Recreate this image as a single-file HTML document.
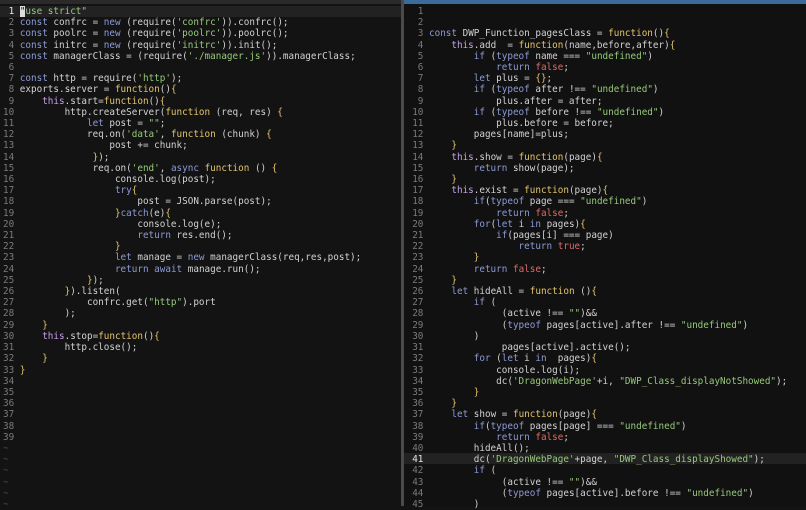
<!DOCTYPE html>
<html><head><meta charset="utf-8"><style>
html,body{margin:0;padding:0;background:#131313;width:806px;height:506px;overflow:hidden}
.top{position:absolute;left:0;top:0;width:806px;height:4px;background:#2a2a2a}
.topb{position:absolute;left:403px;top:0;width:403px;height:4px;background:#3a6b9a}
.div{position:absolute;left:401px;top:0;width:3px;height:506px;background:#4a4a4a}
.rp{position:absolute;left:404px;top:4px;width:402px;height:502px;background:#111}
pre{position:absolute;margin:0;font-family:"DejaVu Sans Mono","Liberation Mono",monospace;font-size:9.3px;line-height:11.2px;color:#d2d2d2;white-space:pre}
.hl{position:absolute;height:11.2px;background:#222}
.n{color:#7a7a7a}.cn{color:#e8e8e8}
.k{color:#8d9ad6}.t{color:#c5a0e6}.f{color:#e3c36c}.s{color:#96c97a}.b{color:#dd6a6a}.y{color:#e3c36c}.tl{color:#3c4a66}
.cur{background:#ddd;color:#111}
</style></head><body>
<div class="top"></div><div class="topb"></div>
<div class="hl" style="left:0;top:6px;width:401px"></div>
<div class="rp"></div>
<div class="div"></div>
<div class="hl" style="left:404px;top:453.2px;width:402px"></div>
<pre style="left:3px;top:6px"><span class="cn"> 1</span> <span class="cur">"</span><span class="s">use strict"</span>
<span class="n"> 2</span> <span class="k">const</span> confrc = <span class="k">new</span> (require(<span class="s">'confrc'</span>)).confrc();
<span class="n"> 3</span> <span class="k">const</span> poolrc = <span class="k">new</span> (require(<span class="s">'poolrc'</span>)).poolrc();
<span class="n"> 4</span> <span class="k">const</span> initrc = <span class="k">new</span> (require(<span class="s">'initrc'</span>)).init();
<span class="n"> 5</span> <span class="k">const</span> managerClass = (require(<span class="s">'./manager.js'</span>)).managerClass;
<span class="n"> 6</span>
<span class="n"> 7</span> <span class="k">const</span> http = require(<span class="s">'http'</span>);
<span class="n"> 8</span> exports.server = <span class="f">function</span>()<span class="y">{</span>
<span class="n"> 9</span>     <span class="t">this</span>.start=<span class="f">function</span>()<span class="y">{</span>
<span class="n">10</span>         http.createServer(<span class="f">function</span> (req, res) <span class="y">{</span>
<span class="n">11</span>             <span class="k">let</span> post = <span class="s">""</span>;
<span class="n">12</span>             req.on(<span class="s">'data'</span>, <span class="f">function</span> (chunk) <span class="y">{</span>
<span class="n">13</span>                 post += chunk;
<span class="n">14</span>              <span class="y">}</span>);
<span class="n">15</span>              req.on(<span class="s">'end'</span>, <span class="k">async</span> <span class="f">function</span> () <span class="y">{</span>
<span class="n">16</span>                  console.log(post);
<span class="n">17</span>                  <span class="k">try</span><span class="y">{</span>
<span class="n">18</span>                      post = JSON.parse(post);
<span class="n">19</span>                  <span class="y">}</span><span class="k">catch</span>(e)<span class="y">{</span>
<span class="n">20</span>                      console.log(e);
<span class="n">21</span>                      <span class="k">return</span> res.end();
<span class="n">22</span>                  <span class="y">}</span>
<span class="n">23</span>                  <span class="k">let</span> manage = <span class="k">new</span> managerClass(req,res,post);
<span class="n">24</span>                  <span class="k">return</span> <span class="k">await</span> manage.run();
<span class="n">25</span>             <span class="y">}</span>);
<span class="n">26</span>         <span class="y">}</span>).listen(
<span class="n">27</span>             confrc.get(<span class="s">"http"</span>).port
<span class="n">28</span>         );
<span class="n">29</span>     <span class="y">}</span>
<span class="n">30</span>     <span class="t">this</span>.stop=<span class="f">function</span>()<span class="y">{</span>
<span class="n">31</span>         http.close();
<span class="n">32</span>     <span class="y">}</span>
<span class="n">33</span> <span class="y">}</span>
<span class="n">34</span>
<span class="n">35</span>
<span class="n">36</span>
<span class="n">37</span>
<span class="n">38</span>
<span class="n">39</span>
<span class="tl">~</span>
<span class="tl">~</span>
<span class="tl">~</span>
<span class="tl">~</span>
<span class="tl">~</span>
<span class="tl">~</span></pre>
<pre style="left:406.6px;top:6px"><span class="n">  1</span>
<span class="n">  2</span>
<span class="n">  3</span> <span class="k">const</span> DWP_Function_pagesClass = <span class="f">function</span>()<span class="y">{</span>
<span class="n">  4</span>     <span class="t">this</span>.add  = <span class="f">function</span>(name,before,after)<span class="y">{</span>
<span class="n">  5</span>         <span class="k">if</span> (<span class="k">typeof</span> name === <span class="s">"undefined"</span>)
<span class="n">  6</span>             <span class="k">return</span> <span class="b">false</span>;
<span class="n">  7</span>         <span class="k">let</span> plus = <span class="y">{}</span>;
<span class="n">  8</span>         <span class="k">if</span> (<span class="k">typeof</span> after !== <span class="s">"undefined"</span>)
<span class="n">  9</span>             plus.after = after;
<span class="n"> 10</span>         <span class="k">if</span> (<span class="k">typeof</span> before !== <span class="s">"undefined"</span>)
<span class="n"> 11</span>             plus.before = before;
<span class="n"> 12</span>         pages[name]=plus;
<span class="n"> 13</span>     <span class="y">}</span>
<span class="n"> 14</span>     <span class="t">this</span>.show = <span class="f">function</span>(page)<span class="y">{</span>
<span class="n"> 15</span>         <span class="k">return</span> show(page);
<span class="n"> 16</span>     <span class="y">}</span>
<span class="n"> 17</span>     <span class="t">this</span>.exist = <span class="f">function</span>(page)<span class="y">{</span>
<span class="n"> 18</span>         <span class="k">if</span>(<span class="k">typeof</span> page === <span class="s">"undefined"</span>)
<span class="n"> 19</span>             <span class="k">return</span> <span class="b">false</span>;
<span class="n"> 20</span>         <span class="k">for</span>(<span class="k">let</span> i <span class="k">in</span> pages)<span class="y">{</span>
<span class="n"> 21</span>             <span class="k">if</span>(pages[i] === page)
<span class="n"> 22</span>                 <span class="k">return</span> <span class="b">true</span>;
<span class="n"> 23</span>         <span class="y">}</span>
<span class="n"> 24</span>         <span class="k">return</span> <span class="b">false</span>;
<span class="n"> 25</span>     <span class="y">}</span>
<span class="n"> 26</span>     <span class="k">let</span> hideAll = <span class="f">function</span> ()<span class="y">{</span>
<span class="n"> 27</span>         <span class="k">if</span> (
<span class="n"> 28</span>              (active !== <span class="s">""</span>)&amp;&amp;
<span class="n"> 29</span>              (<span class="k">typeof</span> pages[active].after !== <span class="s">"undefined"</span>)
<span class="n"> 30</span>         )
<span class="n"> 31</span>              pages[active].active();
<span class="n"> 32</span>         <span class="k">for</span> (<span class="k">let</span> i <span class="k">in</span>  pages)<span class="y">{</span>
<span class="n"> 33</span>             console.log(i);
<span class="n"> 34</span>             dc(<span class="s">'DragonWebPage'</span>+i, <span class="s">"DWP_Class_displayNotShowed"</span>);
<span class="n"> 35</span>         <span class="y">}</span>
<span class="n"> 36</span>     <span class="y">}</span>
<span class="n"> 37</span>     <span class="k">let</span> show = <span class="f">function</span>(page)<span class="y">{</span>
<span class="n"> 38</span>         <span class="k">if</span>(<span class="k">typeof</span> pages[page] === <span class="s">"undefined"</span>)
<span class="n"> 39</span>             <span class="k">return</span> <span class="b">false</span>;
<span class="n"> 40</span>         hideAll();
<span class="cn"> 41</span>         dc(<span class="s">'DragonWebPage'</span>+page, <span class="s">"DWP_Class_displayShowed"</span>);
<span class="n"> 42</span>         <span class="k">if</span> (
<span class="n"> 43</span>              (active !== <span class="s">""</span>)&amp;&amp;
<span class="n"> 44</span>              (<span class="k">typeof</span> pages[active].before !== <span class="s">"undefined"</span>)
<span class="n"> 45</span>         )</pre>
</body></html>
